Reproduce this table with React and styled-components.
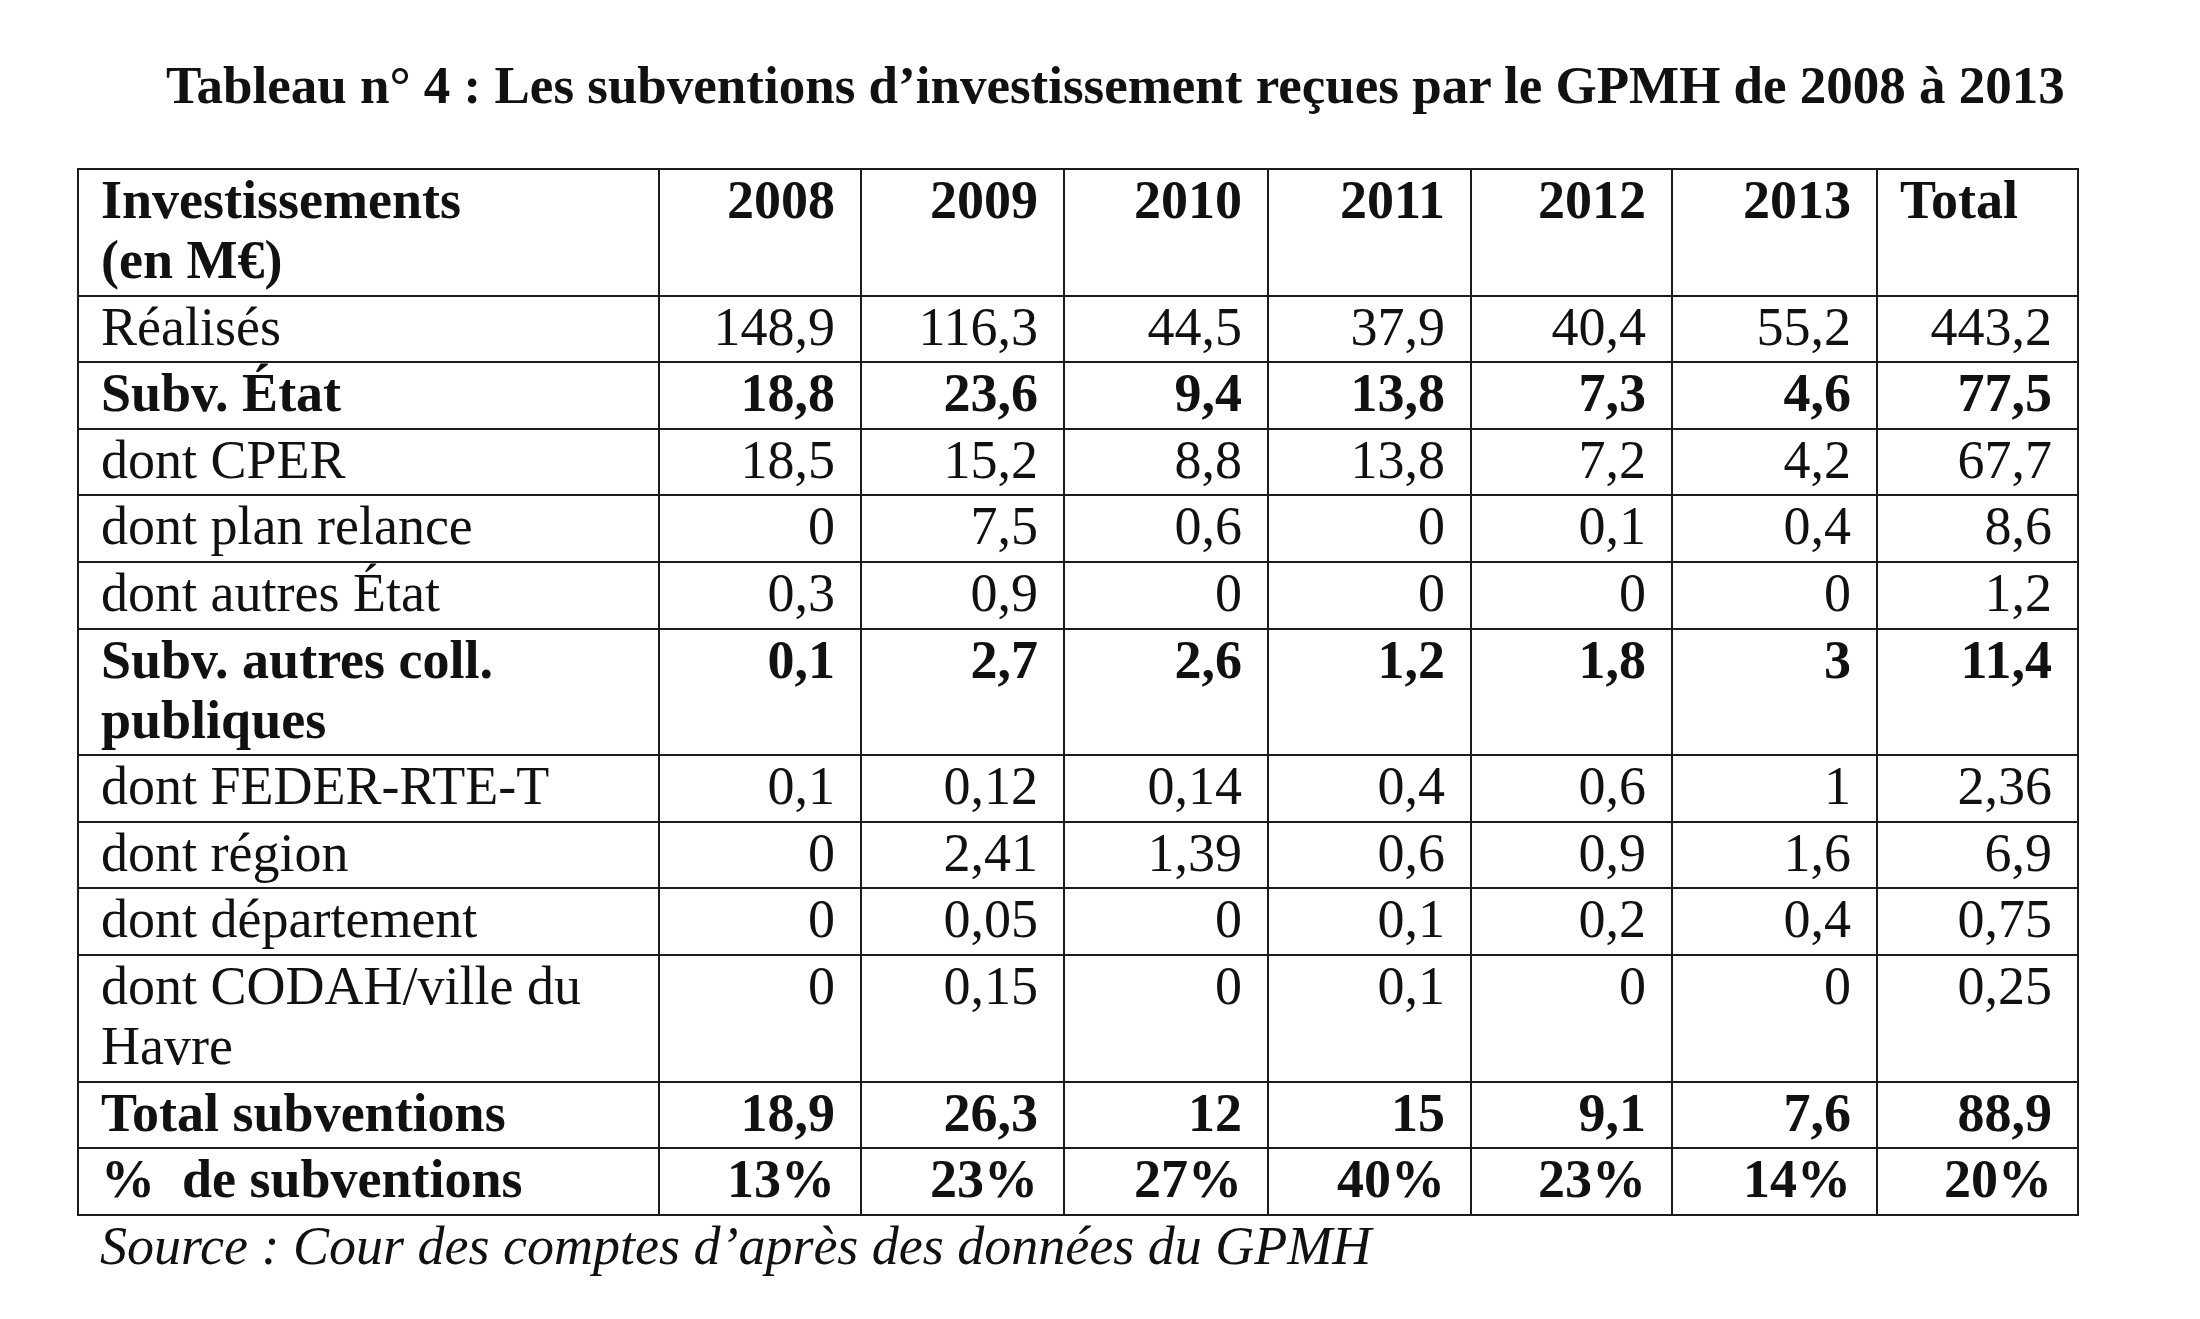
import styled, { createGlobalStyle } from "styled-components";

const GlobalStyle = createGlobalStyle`
  body {
    margin: 0;
    background: #fff;
    color: #111;
    font-family: "Liberation Serif", "Times New Roman", serif;
  }
`;

const Page = styled.div`
  width: 2200px;
  height: 1319px;
  padding-top: 55px;
  box-sizing: border-box;
`;

const Title = styled.h1`
  margin: 0 0 53px 166px;
  font-size: 53px;
  line-height: 60px;
  font-weight: 700;
  white-space: nowrap;
`;

const Table = styled.table`
  margin-left: 77px;
  width: 2000px;
  border-collapse: collapse;
  table-layout: fixed;
  font-size: 54px;
  line-height: 60px;
`;

const Cell = styled.td`
  border: 2px solid #1c1c1c;
  padding: 0 25px 4.6px 22px;
  vertical-align: top;
  text-align: ${(p) => (p.$left ? "left" : "right")};
  font-weight: ${(p) => (p.$bold ? 700 : 400)};
  white-space: nowrap;
`;

const Source = styled.p`
  margin: 0 0 0 100px;
  font-size: 54px;
  line-height: 60px;
  font-style: italic;
`;

const years = ["2008", "2009", "2010", "2011", "2012", "2013"];
const widths = [581, 202, 203, 204, 203, 201, 205, 201];

const rows = [
  { label: ["Réalisés"], vals: ["148,9", "116,3", "44,5", "37,9", "40,4", "55,2", "443,2"] },
  { label: ["Subv. État"], bold: true, vals: ["18,8", "23,6", "9,4", "13,8", "7,3", "4,6", "77,5"] },
  { label: ["dont CPER"], vals: ["18,5", "15,2", "8,8", "13,8", "7,2", "4,2", "67,7"] },
  { label: ["dont plan relance"], vals: ["0", "7,5", "0,6", "0", "0,1", "0,4", "8,6"] },
  { label: ["dont autres État"], vals: ["0,3", "0,9", "0", "0", "0", "0", "1,2"] },
  { label: ["Subv. autres coll.", "publiques"], bold: true, vals: ["0,1", "2,7", "2,6", "1,2", "1,8", "3", "11,4"] },
  { label: ["dont FEDER-RTE-T"], vals: ["0,1", "0,12", "0,14", "0,4", "0,6", "1", "2,36"] },
  { label: ["dont région"], vals: ["0", "2,41", "1,39", "0,6", "0,9", "1,6", "6,9"] },
  { label: ["dont département"], vals: ["0", "0,05", "0", "0,1", "0,2", "0,4", "0,75"] },
  { label: ["dont CODAH/ville du", "Havre"], vals: ["0", "0,15", "0", "0,1", "0", "0", "0,25"] },
  { label: ["Total subventions"], bold: true, vals: ["18,9", "26,3", "12", "15", "9,1", "7,6", "88,9"] },
  { label: ["%\u00a0 de subventions"], bold: true, vals: ["13%", "23%", "27%", "40%", "23%", "14%", "20%"] },
];

const Lines = ({ parts }) =>
  parts.map((t, i) => (
    <span key={i}>
      {i > 0 && <br />}
      {t}
    </span>
  ));

export default function App() {
  return (
    <Page>
      <GlobalStyle />
      <Title>Tableau n° 4 : Les subventions d’investissement reçues par le GPMH de 2008 à 2013</Title>
      <Table>
        <colgroup>
          {widths.map((w, i) => (
            <col key={i} style={{ width: w }} />
          ))}
        </colgroup>
        <thead>
          <tr>
            <Cell as="th" $left $bold>
              Investissements
              <br />
              (en M€)
            </Cell>
            {years.map((y) => (
              <Cell as="th" key={y} $bold>
                {y}
              </Cell>
            ))}
            <Cell as="th" $left $bold>
              Total
            </Cell>
          </tr>
        </thead>
        <tbody>
          {rows.map((r) => (
            <tr key={r.label.join(" ")}>
              <Cell $left $bold={r.bold}>
                <Lines parts={r.label} />
              </Cell>
              {r.vals.map((v, i) => (
                <Cell key={i} $bold={r.bold}>
                  {v}
                </Cell>
              ))}
            </tr>
          ))}
        </tbody>
      </Table>
      <Source>Source : Cour des comptes d’après des données du GPMH</Source>
    </Page>
  );
}
